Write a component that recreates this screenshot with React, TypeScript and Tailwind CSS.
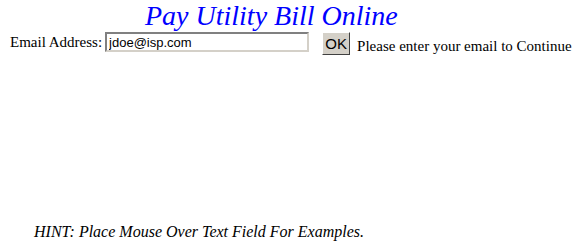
import React from 'react';

const serif = { fontFamily: '"Liberation Serif", "Times New Roman", serif' };
const sans = { fontFamily: '"Liberation Sans", Arial, sans-serif' };

const App: React.FC = () => {
  return (
    <div className="w-[578px] h-[250px] bg-white text-black" style={serif}>
      <div className="pl-[145px] pt-[1px] h-[29px]">
        <h1 className="text-[28px] leading-[29px] italic text-[#0000ff] font-normal" style={serif}>
          Pay Utility Bill Online
        </h1>
      </div>
      <div className="flex items-start pl-[10px] h-[28px]">
        <label className="text-[15px] leading-[17px] pt-[5px] mr-[3px]">Email Address:</label>
        <input
          defaultValue="jdoe@isp.com"
          className="w-[204px] h-[20px] mt-[3px] px-[2px] text-[13px] text-black bg-white border-2 border-t-[#808080] border-l-[#808080] border-r-[#d4d0c8] border-b-[#d4d0c8] outline-none"
          style={sans}
        />
        <button
          className="ml-[13px] mt-[3px] w-[28px] h-[23px] bg-[#d4d0c8] text-[15px] leading-none border border-t-white border-l-white border-r-[#404040] border-b-[#404040]"
          style={sans}
        >
          OK
        </button>
        <span className="text-[15px] leading-[17px] pt-[9px] ml-[7px]">Please enter your email to Continue</span>
      </div>
      <div className="pl-[34px] mt-[163px]">
        <span className="italic text-[16px] leading-[17px]">HINT: Place Mouse Over Text Field For Examples.</span>
      </div>
    </div>
  );
};

export default App;
